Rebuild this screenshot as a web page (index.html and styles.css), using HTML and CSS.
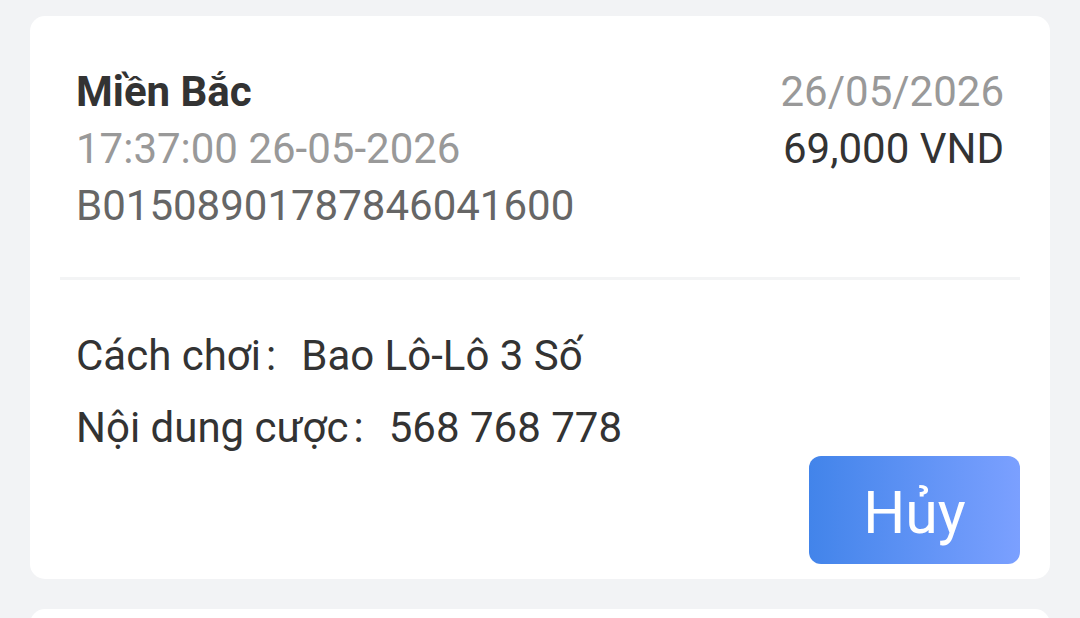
FILE: index.html
```html
<!DOCTYPE html>
<html lang="vi">
<head>
    <meta charset="utf-8">
    <meta name="viewport" content="width=device-width,initial-scale=1">
    <title>Miền Bắc</title>
    <link rel="stylesheet" href="styles.css">
</head>
<body>
    <main class="bet_list">
        <article class="bet_card">
            <header class="bet_header">
                <div>
                    <h2>Miền Bắc</h2>
                    <div class="bet_time">17:37:00 26-05-2026</div>
                    <div class="bet_id">B01508901787846041600</div>
                </div>
                <div class="bet_summary">
                    <div class="bet_date">26/05/2026</div>
                    <div>69,000 VND</div>
                </div>
            </header>
            <dl class="bet_detail">
                <div class="detail_row">
                    <dt>Cách chơi<span class="colon">:</span></dt>
                    <dd>Bao Lô-Lô 3 Số</dd>
                </div>
                <div class="detail_row">
                    <dt>Nội dung cược<span class="colon">:</span></dt>
                    <dd>568 768 778</dd>
                </div>
            </dl>
            <button type="button" class="cancel_button">Hủy</button>
        </article>
        <article class="bet_card"></article>
    </main>
</body>
</html>
```

FILE: styles.css
```css
* {
    box-sizing: border-box;
}

body {
    margin: 0;

    background-color: #f2f3f5;

    font-family: Roboto, "Noto Sans", sans-serif;
    font-size: 42px;
    line-height: 57px;
    color: #333333;
}

.bet_list {
    display: flex;
    flex-direction: column;
    gap: 30px;

    height: 100vh;
    padding: 16px 30px 0;

    overflow: hidden;
}

.bet_card {
    display: flex;
    flex-direction: column;
    flex-shrink: 0;

    min-height: 60px;
    padding: 0 30px 15px;

    background-color: #ffffff;
    border-radius: 15px;
}

.bet_header {
    display: flex;
    justify-content: space-between;

    padding: 47px 16px 43px;

    border-bottom: 3px solid #f3f4f5;
}

.bet_header h2 {
    margin: 0;

    font-size: 42px;
    font-weight: bold;
}

.bet_time,
.bet_date {
    color: #999999;
}

.bet_id {
    color: #666666;
}

.bet_summary {
    text-align: right;
}

.bet_detail {
    display: flex;
    flex-direction: column;
    gap: 15px;

    margin: 0;
    padding: 47px 16px 0;
}

.detail_row {
    display: flex;
}

.detail_row dd {
    margin: 0;
}

.colon {
    padding: 0 25px 0 5px;
}

.cancel_button {
    align-self: flex-end;

    width: 211px;
    height: 108px;
    padding: 4px 0 0;

    background: linear-gradient(to right, #4284ea, #7ba0ff);
    border: none;
    border-radius: 12px;

    font-family: inherit;
    font-size: 59px;
    color: #ffffff;
}
```
